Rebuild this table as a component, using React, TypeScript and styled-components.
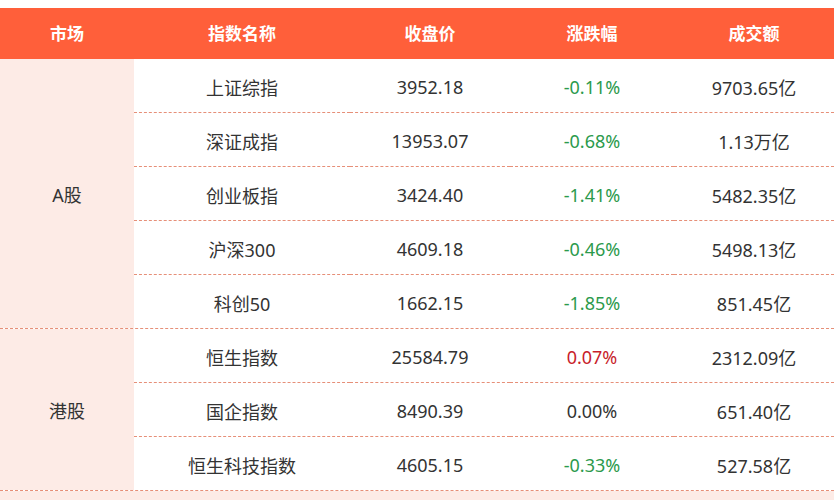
import styled, { createGlobalStyle } from 'styled-components';

const GlobalStyle = createGlobalStyle`
  html, body {
    margin: 0;
    padding: 0;
    background: #fff;
  }
  body {
    font-family: "Noto Sans", "Noto Sans CJK SC", sans-serif;
    color: #333;
  }
`;

const COLS = '134px 216px 160px 164px 160px';
const LINE = '1px dashed #e68f78';

const Page = styled.div`
  width: 834px;
  height: 500px;
  padding-top: 8px;
  box-sizing: border-box;
  overflow: hidden;
  display: flex;
  flex-direction: column;
`;

const HeaderRow = styled.div`
  display: grid;
  grid-template-columns: ${COLS};
  height: 51px;
  background: #ff5f3a;
`;

const HeadCell = styled.div`
  display: flex;
  align-items: center;
  justify-content: center;
  color: #fff;
  font-weight: 700;
  font-size: 17px;
  padding-bottom: 2px;
`;

const Group = styled.div`
  display: grid;
  grid-template-columns: ${COLS};
  border-bottom: ${LINE};
`;

const MarketCell = styled.div<{ $rows: number }>`
  grid-row: span ${({ $rows }) => $rows};
  background: #fdebe6;
  display: flex;
  align-items: center;
  justify-content: center;
  font-size: 18px;
`;

const Cell = styled.div<{ $last: boolean; $tone?: 'up' | 'down' | 'flat' }>`
  height: 51px;
  padding-top: 2px;
  display: flex;
  align-items: center;
  justify-content: center;
  font-size: 18px;
  border-bottom: ${({ $last }) => ($last ? 'none' : LINE)};
  color: ${({ $tone }) =>
    $tone === 'up' ? '#c81d2a' : $tone === 'down' ? '#2c9a4c' : '#333'};
`;

const Tail = styled.div`
  flex: 1;
  background: #fdebe6;
`;

type Row = { name: string; close: string; change: string; volume: string };

const groups: { market: string; rows: Row[] }[] = [
  {
    market: 'A股',
    rows: [
      { name: '上证综指', close: '3952.18', change: '-0.11%', volume: '9703.65亿' },
      { name: '深证成指', close: '13953.07', change: '-0.68%', volume: '1.13万亿' },
      { name: '创业板指', close: '3424.40', change: '-1.41%', volume: '5482.35亿' },
      { name: '沪深300', close: '4609.18', change: '-0.46%', volume: '5498.13亿' },
      { name: '科创50', close: '1662.15', change: '-1.85%', volume: '851.45亿' },
    ],
  },
  {
    market: '港股',
    rows: [
      { name: '恒生指数', close: '25584.79', change: '0.07%', volume: '2312.09亿' },
      { name: '国企指数', close: '8490.39', change: '0.00%', volume: '651.40亿' },
      { name: '恒生科技指数', close: '4605.15', change: '-0.33%', volume: '527.58亿' },
    ],
  },
];

const toneOf = (v: string) =>
  v.startsWith('-') ? 'down' : parseFloat(v) > 0 ? 'up' : 'flat';

export default function App() {
  return (
    <>
      <GlobalStyle />
      <Page>
        <HeaderRow>
          <HeadCell>市场</HeadCell>
          <HeadCell>指数名称</HeadCell>
          <HeadCell>收盘价</HeadCell>
          <HeadCell>涨跌幅</HeadCell>
          <HeadCell>成交额</HeadCell>
        </HeaderRow>
        {groups.map((g) => (
          <Group key={g.market}>
            <MarketCell $rows={g.rows.length}>{g.market}</MarketCell>
            {g.rows.map((r, i) => {
              const last = i === g.rows.length - 1;
              return [
                <Cell key={r.name + 'n'} $last={last}>{r.name}</Cell>,
                <Cell key={r.name + 'c'} $last={last}>{r.close}</Cell>,
                <Cell key={r.name + 'p'} $last={last} $tone={toneOf(r.change)}>
                  {r.change}
                </Cell>,
                <Cell key={r.name + 'v'} $last={last}>{r.volume}</Cell>,
              ];
            })}
          </Group>
        ))}
        <Tail />
      </Page>
    </>
  );
}
